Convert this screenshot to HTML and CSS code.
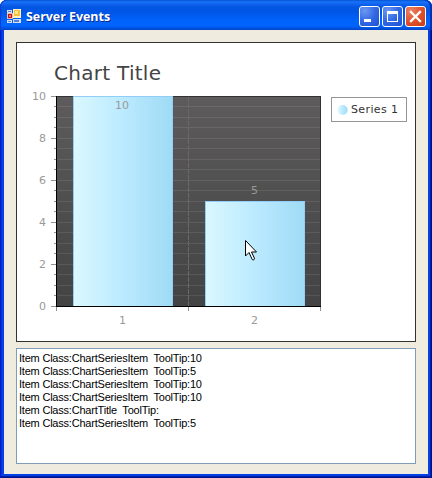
FILE: index.html
```
<!DOCTYPE html>
<html lang="en">
<head>
<meta charset="utf-8">
<title>Server Events</title>
<link rel="stylesheet" href="styles.css">
</head>
<body>
<div class="window">
  <header class="titlebar">
    <svg class="app-icon" width="15" height="15" viewBox="0 0 15 15" shape-rendering="crispEdges">
      <path d="M0 1h5v3H0zM0 11h5v3H0zM6 10h8v4H6z" fill="#d5dfef"/>
      <path d="M1 2h3v1H1zM1 12h3v1H1zM7 11h5v2H7z" fill="#4f82d2"/>
      <rect x="6" y="0" width="8" height="9" fill="#fff3c0"/>
      <rect x="7" y="1" width="6" height="6" fill="#f5c33b"/>
      <rect x="8" y="2" width="3" height="3" fill="#ffe78b"/>
      <rect x="0" y="4" width="6" height="6" fill="#efbab0"/>
      <rect x="1" y="5" width="4" height="4" fill="#b91818"/>
      <rect x="2" y="6" width="2" height="2" fill="#f17862"/>
    </svg>
    <h1 class="caption">Server Events</h1>
    <div class="controls">
      <button class="control" aria-label="Minimize"><svg width="19" height="19" viewBox="0 0 19 19"><path d="M4 12h7v3H4z" fill="#fff"/></svg></button>
      <button class="control" aria-label="Maximize"><svg width="19" height="19" viewBox="0 0 19 19"><path fill-rule="evenodd" d="M4 4h11v11H4zM5 7v7h9V7z" fill="#fff"/></svg></button>
      <button class="control close" aria-label="Close"><svg width="19" height="19" viewBox="0 0 19 19"><path d="M5 5l9 9M14 5l-9 9" stroke="#fff" stroke-width="2.3" stroke-linecap="square"/></svg></button>
    </div>
  </header>
  <main class="client">
    <section class="chart">
      <svg width="398" height="298" viewBox="17 43 398 298">
        <defs>
          <linearGradient id="plot" x1="0" y1="0" x2="0" y2="1"><stop offset="0" stop-color="#5d5b5c"/><stop offset="1" stop-color="#434343"/></linearGradient>
          <linearGradient id="bar"><stop offset="0" stop-color="#daf8ff"/><stop offset=".5" stop-color="#bbeaff"/><stop offset="1" stop-color="#9fdbf5"/></linearGradient>
          <pattern id="grid" x="56" y="96" width="264" height="21" patternUnits="userSpaceOnUse"><path d="M0 .5h264M0 10.5h264" stroke="#fff" stroke-opacity=".09"/></pattern>
          <pattern id="ticks" x="54" y="96" width="2" height="42" patternUnits="userSpaceOnUse"><path d="M0 10.5h2M0 21.5h2M0 31.5h2" stroke="#929292"/></pattern>
        </defs>
        <g shape-rendering="crispEdges">
          <rect x="56" y="96" width="264" height="210" fill="url(#plot)"/>
          <rect x="56" y="96" width="264" height="210" fill="url(#grid)"/>
          <path d="M188.500 97v209" stroke="#6c696c" stroke-dasharray="5 1"/>
          <path d="M56 96.500h264.500V306" fill="none" stroke="#333"/>
          <rect x="54" y="96" width="2" height="210" fill="url(#ticks)"/>
          <rect x="73.500" y="96.500" width="99" height="210" fill="url(#bar)" stroke="#91cdf7"/>
          <rect x="205.500" y="201.500" width="99" height="105" fill="url(#bar)" stroke="#91cdf7"/>
          <path d="M51 96.500h5M51 138.500h5M51 180.500h5M51 222.500h5M51 264.500h5M51 306.500h5M56.500 307v4M188.500 307v4M320.500 307v4" stroke="#929292"/>
          <path d="M56.500 96v210.500H321" fill="none" stroke="#000"/>
        </g>
        <text class="chart-title" x="54" y="80" textLength="107">Chart Title</text>
        <g class="axis" text-anchor="end">
          <text x="46" y="100">10</text><text x="46" y="142">8</text><text x="46" y="184">6</text>
          <text x="46" y="226">4</text><text x="46" y="268">2</text><text x="46" y="310">0</text>
        </g>
        <g class="axis" text-anchor="middle">
          <text x="122.500" y="324">1</text><text x="254.500" y="324">2</text>
          <text x="122" y="109">10</text><text x="254.500" y="194">5</text>
        </g>
        <rect x="331.500" y="97.500" width="75" height="24" fill="#fff" stroke="#979497"/>
        <circle cx="342.700" cy="110" r="5" fill="url(#bar)"/>
        <text class="legend" x="351" y="113" textLength="47">Series 1</text>
        <path class="cursor" d="M245.500 240.500v15.500l3.500-3.500 3 6.500c.4 1.700 3 1 2.300-1l-2.800-6h5z"/>
      </svg>
    </section>
    <ul class="log">
      <li>Item Class:ChartSeriesItem  ToolTip:10</li>
      <li>Item Class:ChartSeriesItem  ToolTip:5</li>
      <li>Item Class:ChartSeriesItem  ToolTip:10</li>
      <li>Item Class:ChartSeriesItem  ToolTip:10</li>
      <li>Item Class:ChartTitle  ToolTip:</li>
      <li>Item Class:ChartSeriesItem  ToolTip:5</li>
    </ul>
  </main>
</div>
</body>
</html>
```
FILE: styles.css
```
* { box-sizing: border-box; }
body { margin: 0; background: #fff; overflow: hidden; }
.window {
  width: 432px;
  height: 478px;
  display: flex;
  flex-direction: column;
  padding: 0 4px 4px;
  border-radius: 7px 7px 0 0;
  background: #0441e4;
  box-shadow: inset 1px 0 #0019ce, inset -1px 0 #00138c, inset -2px 0 #001da8, inset 0 -1px #00138c, inset 0 -2px #001da8, inset 2px 0 #0831d9;
}
.titlebar {
  flex: none;
  height: 30px;
  margin: 0 -4px;
  padding: 2px 6px 0 7px;
  display: flex;
  align-items: center;
  border-radius: 7px 7px 0 0;
  background: linear-gradient(#0755d5 0, #1773f8 2px, #1264ef 4px, #0256e2 7px, #0055e5 12px, #0062fb 20px, #0066ff 25px, #005cf3 27px, #0144c5 30px);
  box-shadow: inset 1px 0 #0841d0, inset -2px 0 #0032b4;
}
.app-icon { flex: none; }
.caption {
  margin: 2px 0 0 4px;
  font: bold 12.500px/16px "Open Sans", sans-serif;
  letter-spacing: -0.05px;
  color: #fff;
  text-shadow: 1px 1px #0a2a91;
}
.controls { display: flex; gap: 2px; margin-left: auto; }
.control {
  width: 21px;
  height: 21px;
  padding: 0;
  border: 1px solid #fff;
  border-radius: 3px;
  background: radial-gradient(circle at 25% 20%, #6c98f2, #3469e4 50%, #1d50d3);
}
.control svg { display: block; }
.close { background: radial-gradient(circle at 25% 20%, #ec8265, #e1532f 50%, #c83a12); }
.client {
  flex: 1;
  display: flex;
  flex-direction: column;
  gap: 6px;
  padding: 12px 12px 10px;
  background: #efebde;
}
.chart { flex: none; height: 300px; border: 1px solid #333; background: #fff; }
.chart svg { display: block; }
.chart text { font-family: "DejaVu Sans", sans-serif; }
.chart .chart-title { font-size: 20px; fill: #444; }
.axis { font-size: 11px; fill: #999; }
.chart .legend { font-size: 11px; fill: #333; }
.cursor { fill: #fff; stroke: #000; }
.log {
  flex: none;
  height: 116px;
  margin: 0;
  padding: 3px 2px;
  list-style: none;
  border: 1px solid #7f9db9;
  background: #fff;
  color: #000;
  font: 11px/13px "Liberation Sans", sans-serif;
  letter-spacing: -0.21px;
}
.log li { white-space: pre; }
```
